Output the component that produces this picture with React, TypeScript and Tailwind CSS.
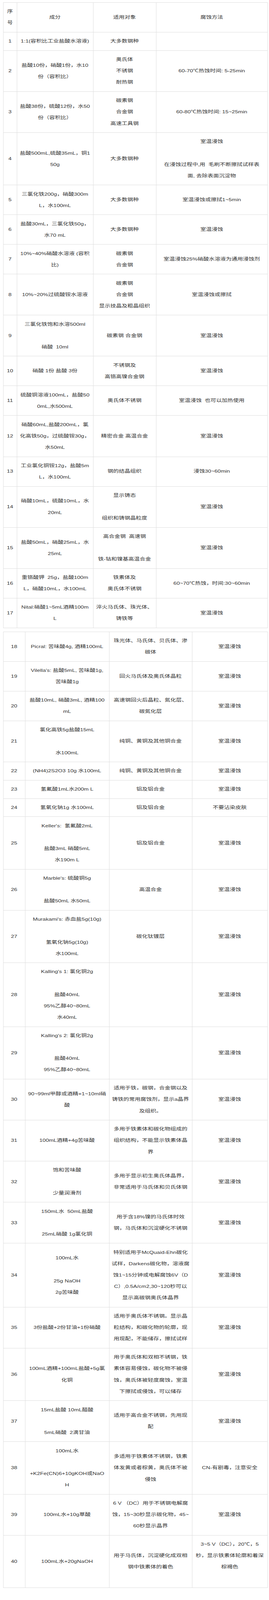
import React from 'react'

type Row = string[][]

const table1: Row[] = [
  [['序', '号'], ['成分'], ['适用对象'], ['腐蚀方法']],
  [['1'], ['1:1(容积比工业盐酸水溶液)'], ['大多数钢种'], ['']],
  [['2'], ['盐酸10份，硝酸1份，水10', '份（容积比）'], ['奥氏体', '不锈钢', '耐热钢'], ['60-70℃热蚀时间: 5-25min']],
  [['3'], ['盐酸38份，硫酸12份，水50', '份（容积比）'], ['碳素钢', '合金钢', '高速工具钢'], ['60-80℃热蚀时间: 15~25min']],
  [['4'], ['盐酸500mL,硫酸35mL，铜1', '50g'], ['大多数钢种'], ['室温浸蚀', '', '在浸蚀过程中,用  毛刷不断擦拭试样表', '面, 去除表面沉淀物']],
  [['5'], ['三氯化铁200g，硝酸300m', 'L，水100mL'], ['大多数钢种'], ['室温浸蚀或擦拭1~5min']],
  [['6'], ['盐酸30mL，三氯化铁50g，', '水70 mL'], ['大多数钢种'], ['室温浸蚀']],
  [['7'], ['10%~40%硝酸水溶液 (容积', '比)'], ['碳素钢', '合金钢'], ['室温浸蚀25%硝酸水溶液为通用浸蚀剂']],
  [['8'], ['10%~20%过硫酸铵水溶液'], ['碳素钢', '合金钢', '显示技晶及粗晶组织'], ['室温浸蚀或擦拭']],
  [['9'], ['三氯化铁饱和水溶500ml', '', '硝酸  10ml'], ['碳素钢 合金钢'], ['室温浸蚀']],
  [['10'], ['硝酸 1份 盐酸 3份'], ['不锈钢及', '高铬高镍合金钢'], ['室温浸蚀']],
  [['11'], ['硫酸铜溶液100mL，盐酸50', '0mL,水500mL'], ['奥氏体不锈钢'], ['室温浸蚀  也可以加热使用']],
  [['12'], ['硝酸60mL,盐酸200mL，氯', '化高铁50g，过硫酸铵30g，', '水50mL'], ['精密合金 高温合金'], ['室温浸蚀']],
  [['13'], ['工业氯化铜铵12g，盐酸5m', 'L，水100mL'], ['钢的结晶组织'], ['浸蚀30~60min']],
  [['14'], ['硝酸10mL，硫酸10mL，水', '20mL'], ['显示铸态', '', '组织和铸钢晶粒度'], ['室温浸蚀']],
  [['15'], ['盐酸50mL，硝酸25mL，水', '25mL'], ['高合金钢  高速钢', '', '铁-钴和镍基高温合金'], ['室温浸蚀']],
  [['16'], ['重铬酸钾  25g，盐酸100m', 'L，硝酸10mL，水100mL'], ['铁素体及', '奥氏体不锈钢'], ['60~70℃热蚀，时间:30~60min']],
  [['17'], ['Nital:硝酸1~5mL酒精100m', 'L'], ['淬火马氏体、珠光体、', '铸铁等'], ['室温浸蚀']],
]

const table2: Row[] = [
  [['18'], ['Picral: 苦味酸4g, 酒精100mL'], ['珠光体、马氏体、贝氏体、渗', '碳体'], ['室温浸蚀']],
  [['19'], ["Vilella's: 盐酸5mL, 苦味酸1g,", '苦味酸1g'], ['回火马氏体及奥氏体晶粒'], ['室温浸蚀']],
  [['20'], ['盐酸10mL, 硝酸3mL, 酒精100', 'mL'], ['高速钢回火后晶粒、氮化层、', '碳氮化层'], ['室温浸蚀']],
  [['21'], ['氯化高铁5g盐酸15mL', '', '水100mL'], ['纯铜、黄铜及其他铜合金'], ['室温浸蚀']],
  [['22'], ['(NH4)2S2O3 10g 水100mL'], ['纯铜、黄铜及其他铜合金'], ['室温浸蚀']],
  [['23'], ['氢氟酸1mL水200m L'], ['铝及铝合金'], ['室温浸蚀']],
  [['24'], ['氢氧化钠1g 水100mL'], ['铝及铝合金'], ['不要沾染皮肤']],
  [['25'], ["Keller's:  氢氟酸2mL", '', '盐酸3mL 硝酸5mL', '水190m L'], ['铝及铝合金'], ['室温浸蚀']],
  [['26'], ["Marble's: 硫酸铜5g", '', '盐酸50mL 水50mL'], ['高温合金'], ['室温浸蚀']],
  [['27'], ["Murakami's: 赤血盐5g(10g)", '', '氢氧化钠5g(10g)', '水100mL'], ['碳化钛镀层'], ['室温浸蚀']],
  [['28'], ["Kalling's 1: 氯化铜2g", '', '盐酸40mL', '95%乙醇40~80mL', '水40mL'], [''], ['室温浸蚀']],
  [['29'], ["Kalling's 2: 氯化铜2g", '', '盐酸40mL', '95%乙醇40~80mL'], [''], ['室温浸蚀']],
  [['30'], ['90~99ml甲醇或酒精+1~10ml硝', '酸'], ['适用于铁，碳钢，合金钢以及', '铸铁的常用腐蚀剂，显示a晶界', '及组织。'], ['室温浸蚀']],
  [['31'], ['100mL酒精+4g苦味酸'], ['多用于铁素体和碳化物组成的', '组织结构，不能显示铁素体晶', '界'], ['室温浸蚀']],
  [['32'], ['饱和苦味酸', '', '少量润滑剂'], ['多用于显示初生奥氏体晶界，', '非常适用于马氏体和贝氏体钢'], ['室温浸蚀']],
  [['33'], ['150mL水  50mL盐酸', '', '25mL硝酸 1g氯化铜'], ['用于含18%镍的马氏体时效', '钢，马氏体和沉淀硬化不锈钢'], ['室温浸蚀']],
  [
    ['34'],
    ['100mL水', '', '25g NaOH', '2g苦味酸'],
    ['特别适用于McQuaid-Ehn碳化', '试样，Darkens碳化物，溶液腐', '蚀1~15分钟或电解腐蚀6V（D', 'C）,0.5A/cm2,30~120秒可以', '显示高碳钢奥氏体晶界'],
    ['室温浸蚀'],
  ],
  [['35'], ['3份盐酸+2份甘油+1份硝酸'], ['适用于奥氏体不锈钢。显示晶', '粒结构，和碳化物的轮廓，现', '用现配，不能储存，擦拭试样'], ['室温浸蚀']],
  [
    ['36'],
    ['100mL酒精+100mL盐酸+5g氯', '化铜'],
    ['用于奥氏体和双相不锈钢，铁', '素体容易侵蚀，碳化物不被侵', '蚀，奥氏体被轻度腐蚀，室温', '下擦拭或侵蚀，可以储存'],
    ['室温浸蚀'],
  ],
  [['37'], ['15mL盐酸 10mL醋酸', '', '5mL硝酸  2滴甘油'], ['适用于高合金不锈钢，先用现', '配'], ['室温浸蚀']],
  [
    ['38'],
    ['100mL水', '', '+K2Fe(CN)6+10gKOH或NaO', 'H'],
    ['多适用于铁素体不锈钢，铁素', '体发黄或者棕黄，奥氏体不被', '侵蚀'],
    ['CN-有剧毒，注意安全'],
  ],
  [['39'], ['100mL水+10g草酸'], ['6 V （DC）用于不锈钢电解腐', '蚀，15~30秒显示碳化物，45~', '60秒显示晶界'], ['室温浸蚀']],
  [['40'], ['100mL水+20gNaOH'], ['用于马氏体，沉淀硬化成双相', '钢中铁素体的着色'], ['3~5 V（DC），20℃，5', '秒，显示铁素体轮廓和着深', '棕褐色', '']],
]

const Cell = ({ lines }: { lines: string[] }) => (
  <td className="border border-[#dedede] px-[2px] py-[8.34px] text-center align-middle">
    {lines.map((line, i) => (
      <div key={i} className="h-[29.17px] scale-y-[0.8] whitespace-pre leading-[29.17px]">
        {line}
      </div>
    ))}
  </td>
)

const Table = ({ rows, widths }: { rows: Row[]; widths: string[] }) => (
  <table className="ml-[7.5px] w-[676px] table-fixed border-collapse">
    <colgroup>
      {widths.map((w, i) => (
        <col key={i} className={w} />
      ))}
    </colgroup>
    <tbody>
      {rows.map((row, i) => (
        <tr key={i}>
          {row.map((lines, j) => (
            <Cell key={j} lines={lines} />
          ))}
        </tr>
      ))}
    </tbody>
  </table>
)

const App = () => {
  return (
    <div className="bg-white pt-[6px] pb-[20px] font-['Liberation_Sans','Noto_Sans_CJK_SC',sans-serif] text-[14.5px] text-[#333333]">
      <Table rows={table1} widths={['w-[35px]', 'w-[195px]', 'w-[161px]', 'w-[285px]']} />
      <div className="h-[9.3px]" />
      <Table rows={table2} widths={['w-[56px]', 'w-[215px]', 'w-[212px]', 'w-[193px]']} />
    </div>
  )
}

export default App
